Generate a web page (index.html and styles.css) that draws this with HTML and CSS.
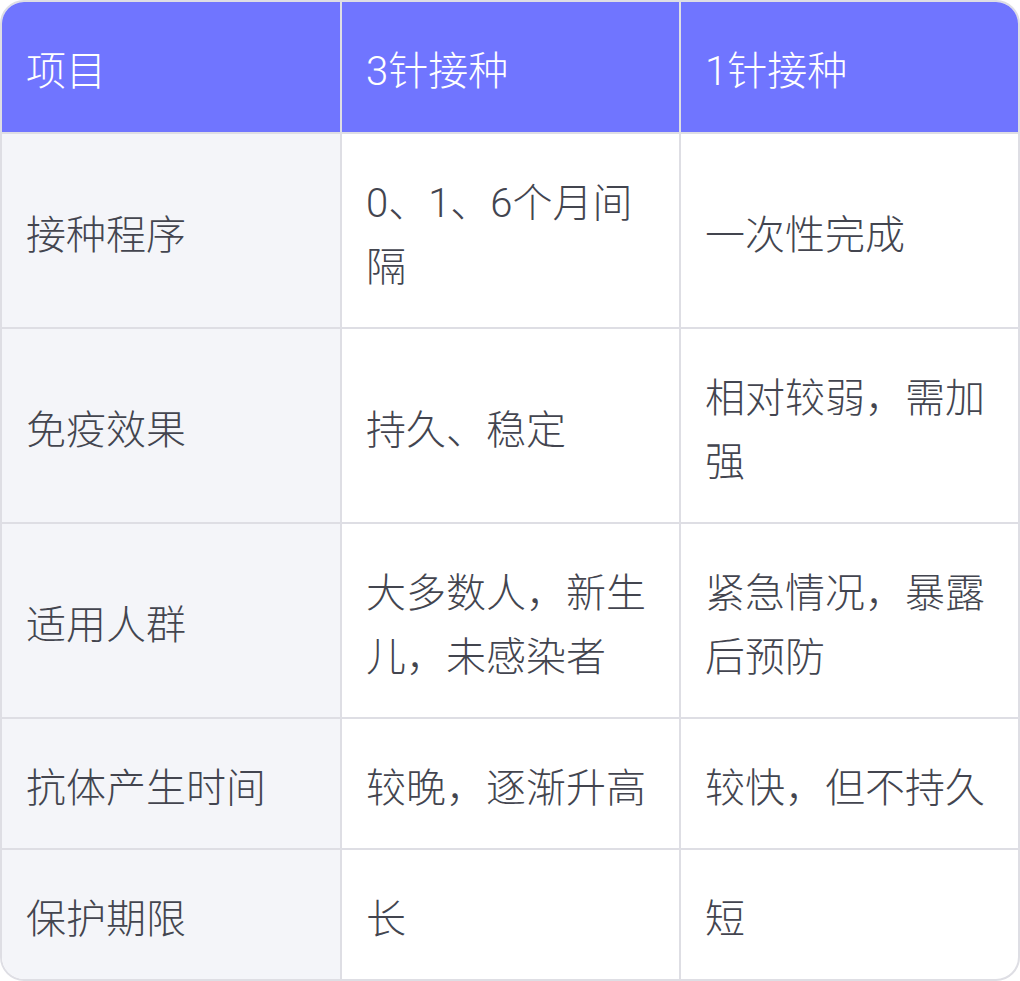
FILE: index.html
```html
<!DOCTYPE html>
<html lang="zh">
<head>
<meta charset="utf-8">
<link rel="stylesheet" href="styles.css">
</head>
<body>
<div class="wrap">
<table class="cmp">
  <colgroup><col class="c1"><col class="c2"><col class="c3"></colgroup>
  <thead>
    <tr><th>项目</th><th>3针接种</th><th>1针接种</th></tr>
  </thead>
  <tbody>
    <tr><td>接种程序</td><td>0、1、6个月间隔</td><td>一次性完成</td></tr>
    <tr><td>免疫效果</td><td>持久、稳定</td><td>相对较弱，需加强</td></tr>
    <tr><td>适用人群</td><td>大多数人，新生儿，未感染者</td><td>紧急情况，暴露后预防</td></tr>
    <tr><td>抗体产生时间</td><td>较晚，逐渐升高</td><td>较快，但不持久</td></tr>
    <tr><td>保护期限</td><td>长</td><td>短</td></tr>
  </tbody>
</table>
</div>
</body>
</html>
```
FILE: styles.css
```css
html, body {
  margin: 0;
  padding: 0;
  background: #ffffff;
}
.wrap {
  width: 1020px;
  box-sizing: border-box;
  border: 2px solid #dedee4;
  border-radius: 24px;
  overflow: hidden;
}
.cmp {
  width: 100%;
  border-collapse: separate;
  border-spacing: 0;
  table-layout: fixed;
  font-family: Roboto, "Noto Sans CJK SC", sans-serif;
  font-size: 40px;
  font-weight: 300;
  line-height: 64px;
  color: #43454f;
}
.c1 { width: 340px; }
.c2 { width: 339px; }
.c3 { width: auto; }
.cmp th, .cmp td {
  text-align: left;
  vertical-align: middle;
  padding: 38px 26px 27px 24px;
  border-bottom: 2px solid #dedee4;
  border-right: 2px solid #dedee4;
  font-weight: 300;
}
.cmp th:last-child, .cmp td:last-child { border-right: none; }
.cmp tbody tr:last-child td { border-bottom: none; }
.cmp thead th {
  background: #7075ff;
  color: #ffffff;
  padding-top: 38px;
  padding-bottom: 28px;
}
.cmp tbody td:first-child {
  background: #f4f5f9;
}
```
